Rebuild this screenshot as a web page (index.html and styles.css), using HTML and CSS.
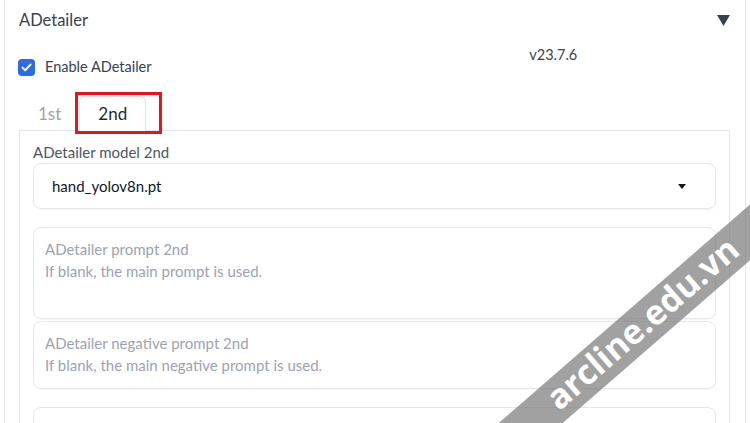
FILE: index.html
```html
<!DOCTYPE html>
<html lang="en">
<head>
<meta charset="utf-8">
<title>ADetailer</title>
<link rel="stylesheet" href="styles.css">
</head>
<body>
<div class="page">
  <section class="accordion">
    <div class="acc-head">
      <span class="acc-title">ADetailer</span>
      <svg class="caret" width="13" height="11" viewBox="0 0 13 11"><path d="M0 0 H13 L6.5 11 Z" fill="#374151"/></svg>
    </div>
    <div class="acc-body">
      <div class="row">
        <div class="col">
          <label class="check">
            <span class="box"><svg width="11" height="9" viewBox="0 0 11 9"><path d="M1.5 4.6 L4.2 7.2 L9.5 1.6" fill="none" stroke="#fff" stroke-width="2" stroke-linecap="round" stroke-linejoin="round"/></svg></span>
            <span>Enable ADetailer</span>
          </label>
        </div>
        <div class="col ver">v23.7.6</div>
      </div>
      <div class="tabs">
        <div class="tab-nav">
          <div class="tab">1st</div>
          <div class="tab active">2nd<span class="highlight"></span></div>
        </div>
        <div class="tab-panel">
          <div class="field-label">ADetailer model 2nd</div>
          <div class="select">
            <span>hand_yolov8n.pt</span>
            <svg width="8" height="5" viewBox="0 0 8 5"><path d="M0 0 H8 L4 5 Z" fill="#111827"/></svg>
          </div>
          <div class="textbox tall">
            <div class="tb-label">ADetailer prompt 2nd</div>
            <div class="tb-ph">If blank, the main prompt is used.</div>
          </div>
          <div class="textbox near">
            <div class="tb-label">ADetailer negative prompt 2nd</div>
            <div class="tb-ph">If blank, the main negative prompt is used.</div>
          </div>
          <div class="textbox tall"></div>
        </div>
      </div>
    </div>
  </section>
  <div class="watermark"><span>arcline.edu.vn</span></div>
</div>
</body>
</html>
```

FILE: styles.css
```css
html, body {
  margin: 0;
  padding: 0;
  background: #fff;
  overflow: hidden;
  height: 423px;
}
.page {
  position: relative;
  width: 750px;
  height: 423px;
  overflow: hidden;
  font-family: Lato, "Noto Sans", sans-serif;
  color: #1f2937;
}
.accordion {
  margin-left: 4px;
  width: 740px;
  min-height: 460px;
  border-left: 1px solid #e5e7eb;
  border-right: 1px solid #e5e7eb;
}
.acc-head {
  display: flex;
  justify-content: space-between;
  align-items: center;
  padding: 8px 15px 0 14px;
  height: 24px;
}
.acc-title {
  font-size: 16.5px;
  line-height: 24px;
  color: #374151;
}
.caret {
  display: block;
}
.acc-body {
  padding: 0 15px 0 14px;
}
.row {
  display: flex;
  margin-top: 13px;
}
.col {
  flex: 1;
}
.check {
  display: flex;
  align-items: center;
  gap: 10px;
  margin-top: 12px;
  font-size: 14.5px;
  line-height: 20px;
  color: #374151;
}
.box {
  width: 17px;
  height: 17px;
  margin-left: -1px;
  border-radius: 4px;
  background: #2f6ae6;
  display: flex;
  align-items: center;
  justify-content: center;
}
.ver {
  text-align: center;
  font-size: 14.5px;
  line-height: 20px;
  color: #374151;
  padding-left: 4px;
}
.tabs {
  margin-top: 19px;
}
.tab-nav {
  display: flex;
  margin-bottom: -1px;
  position: relative;
  z-index: 1;
}
.tab {
  position: relative;
  padding: 6px 17px 5px 18px;
  font-size: 17px;
  line-height: 22px;
  color: #9ca3af;
  border: 1px solid transparent;
  border-bottom: none;
  border-radius: 6px 6px 0 0;
}
.tab.active {
  color: #1f2937;
  background: #fff;
  border-color: #e5e7eb;
  padding: 6px 18px 6px 18px;
}
.highlight {
  position: absolute;
  left: -5px;
  right: -17px;
  top: -5px;
  bottom: -3px;
  border: 3px solid #e8141b;
}
.tab-panel {
  border: 1px solid #e5e7eb;
  border-bottom: none;
  padding: 11px 13px 0 13px;
  min-height: 300px;
}
.field-label {
  font-size: 15px;
  line-height: 20px;
  color: #4b5563;
  margin-bottom: 1px;
}
.select {
  height: 44px;
  border: 1px solid #e5e7eb;
  border-radius: 8px;
  box-shadow: 0 1px 2px rgba(0, 0, 0, 0.05);
  display: flex;
  align-items: center;
  justify-content: space-between;
  padding: 0 29px 0 18px;
  font-size: 15px;
  color: #111827;
}
.textbox {
  border: 1px solid #e5e7eb;
  border-radius: 8px;
  box-shadow: 0 1px 2px rgba(0, 0, 0, 0.04);
  padding: 10px 11px;
  margin-top: 18px;
  height: 70px;
  font-size: 15px;
  line-height: 22px;
  color: #9ca3af;
}
.textbox.near {
  margin-top: 2px;
  height: 46px;
}
.watermark {
  position: absolute;
  left: 320px;
  top: 307px;
  width: 640px;
  height: 42px;
  background: rgba(110, 110, 110, 0.65);
  transform: rotate(-41deg);
  display: flex;
  align-items: center;
  justify-content: center;
}
.watermark span {
  font-family: "Open Sans", sans-serif;
  font-weight: 700;
  font-size: 34px;
  line-height: 42px;
  color: #fff;
  transform: translate(5px, -3px);
}
```
